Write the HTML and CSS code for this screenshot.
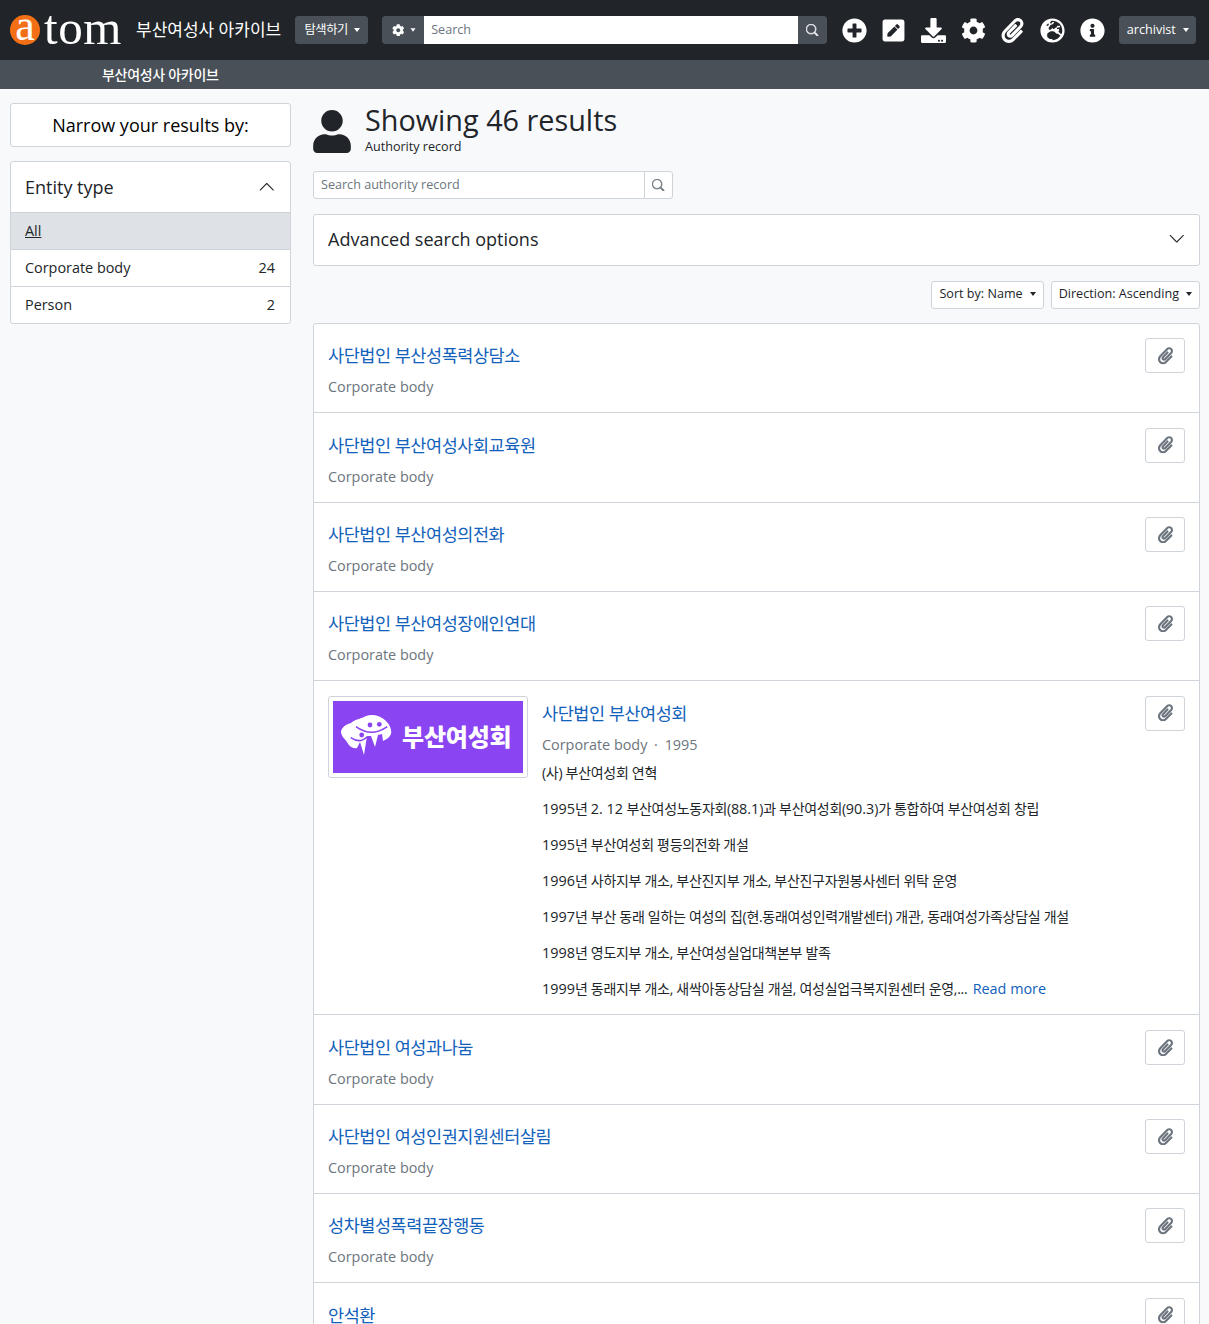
FILE: index.html
```html
<!DOCTYPE html>
<html lang="ko">
<head>
<meta charset="utf-8">
<title>부산여성사 아카이브</title>
<link rel="stylesheet" href="styles.css">
</head>
<body>
<svg class="defs" aria-hidden="true">
  <symbol id="i-search" viewBox="0 0 16 16"><path d="M11.742 10.344a6.5 6.5 0 1 0-1.397 1.398h-.001c.03.04.062.078.098.115l3.85 3.85a1 1 0 0 0 1.415-1.414l-3.85-3.85a1.007 1.007 0 0 0-.115-.1zM12 6.5a5.5 5.5 0 1 1-11 0 5.5 5.5 0 0 1 11 0z"/></symbol>
  <symbol id="i-cog" viewBox="0 0 512 512"><path d="M487.4 315.7l-42.6-24.6c4.3-23.2 4.3-47 0-70.2l42.6-24.6c4.9-2.8 7.1-8.6 5.5-14-11.1-35.6-30-67.8-54.7-94.6-3.8-4.1-10-5.1-14.8-2.3L380.8 110c-17.9-15.4-38.5-27.3-60.8-35.1V25.8c0-5.6-3.9-10.5-9.4-11.7-36.7-8.2-74.3-7.8-109.2 0-5.5 1.2-9.4 6.1-9.4 11.7V75c-22.2 7.9-42.8 19.8-60.8 35.1L88.7 85.5c-4.9-2.8-11-1.9-14.8 2.3-24.7 26.7-43.6 58.9-54.7 94.6-1.7 5.4.6 11.2 5.5 14L67.3 221c-4.3 23.2-4.3 47 0 70.2l-42.6 24.6c-4.9 2.8-7.1 8.6-5.5 14 11.1 35.6 30 67.8 54.7 94.6 3.8 4.1 10 5.1 14.8 2.3l42.6-24.6c17.9 15.4 38.5 27.3 60.8 35.1v49.2c0 5.6 3.9 10.5 9.4 11.7 36.7 8.2 74.3 7.8 109.2 0 5.5-1.2 9.4-6.1 9.4-11.7v-49.2c22.2-7.9 42.8-19.8 60.8-35.1l42.6 24.6c4.9 2.8 11 1.9 14.8-2.3 24.7-26.7 43.6-58.9 54.7-94.6 1.5-5.5-.7-11.3-5.6-14.1zM256 336c-44.1 0-80-35.9-80-80s35.9-80 80-80 80 35.9 80 80-35.9 80-80 80z"/></symbol>
  <symbol id="i-clip" viewBox="0 0 448 512"><path d="M43.246 466.142c-58.43-60.289-57.341-157.511 1.386-217.581L254.392 34c44.316-45.332 116.351-45.336 160.671 0 43.89 44.894 43.943 117.329 0 162.276L232.214 383.128c-29.855 30.537-78.633 30.111-107.982-.998-28.275-29.97-27.368-77.473 1.452-106.953l143.743-146.835c6.182-6.314 16.312-6.422 22.626-.241l22.861 22.379c6.315 6.182 6.422 16.312.241 22.626L171.427 319.927c-4.932 5.045-5.236 13.428-.648 18.292 4.372 4.634 11.245 4.711 15.688.165l182.849-186.851c19.613-20.062 19.613-52.725-.011-72.798-19.189-19.627-49.957-19.637-69.154 0L90.39 293.295c-34.763 35.56-35.299 93.12-1.191 128.313 34.01 35.093 88.985 35.137 123.058.286l172.06-175.999c6.177-6.319 16.307-6.433 22.626-.256l22.877 22.364c6.319 6.177 6.434 16.307.256 22.626l-172.06 175.998c-59.576 60.938-155.943 60.216-214.77-.485z"/></symbol>
</svg>

<header class="topbar">
  <a class="brand" href="#">
    <span class="logo"><span class="logo-a">a</span><span class="logo-rest">tom</span></span>
    <span class="brand-name">부산여성사 아카이브</span>
  </a>
  <button class="btn-dark browse">탐색하기<span class="caret"></span></button>
  <div class="searchbox">
    <button class="btn-dark cog-btn"><svg class="ic-cog"><use href="#i-cog"/></svg><span class="caret"></span></button>
    <span class="search-input">Search</span>
    <button class="btn-dark search-btn"><svg class="ic-search"><use href="#i-search"/></svg></button>
  </div>
  <nav class="iconbar">
    <svg class="nav-ic" viewBox="0 0 512 512"><path d="M256 8C119 8 8 119 8 256s111 248 248 248 248-111 248-248S393 8 256 8zm144 276c0 6.6-5.4 12-12 12h-92v92c0 6.6-5.4 12-12 12h-56c-6.6 0-12-5.4-12-12v-92h-92c-6.6 0-12-5.4-12-12v-56c0-6.6 5.4-12 12-12h92v-92c0-6.6 5.4-12 12-12h56c6.6 0 12 5.4 12 12v92h92c6.6 0 12 5.4 12 12v56z"/></svg>
    <svg class="nav-ic" viewBox="0 0 448 512"><path d="M400 480H48c-26.5 0-48-21.5-48-48V80c0-26.5 21.5-48 48-48h352c26.5 0 48 21.5 48 48v352c0 26.5-21.5 48-48 48zM238.1 177.9L102.4 313.6l-6.3 57.1c-.8 7.6 5.6 14.1 13.3 13.3l57.1-6.3L302.2 242c2.3-2.3 2.3-6.1 0-8.5L246.7 178c-2.5-2.4-6.3-2.4-8.6-.1zM345 165.1L314.9 135c-9.4-9.4-24.7-9.4-34.1 0l-23.1 23.1c-2.3 2.3-2.3 6.1 0 8.5l55.5 55.5c2.3 2.3 6.1 2.3 8.5 0L345 199.2c9.3-9.3 9.3-24.7 0-34.1z"/></svg>
    <svg class="nav-ic" viewBox="0 0 512 512"><path d="M216 0h80c13.3 0 24 10.7 24 24v168h87.7c17.8 0 26.7 21.5 14.1 34.1L269.7 378.3c-7.5 7.5-19.8 7.5-27.3 0L90.1 226.1c-12.6-12.6-3.7-34.1 14.1-34.1H192V24c0-13.3 10.7-24 24-24zm296 376v112c0 13.3-10.7 24-24 24H24c-13.3 0-24-10.7-24-24V376c0-13.3 10.7-24 24-24h146.7l49 49c20.1 20.1 52.5 20.1 72.6 0l49-49H488c13.3 0 24 10.7 24 24zm-124 88c0-11-9-20-20-20s-20 9-20 20 9 20 20 20 20-9 20-20zm64 0c0-11-9-20-20-20s-20 9-20 20 9 20 20 20 20-9 20-20z"/></svg>
    <svg class="nav-ic"><use href="#i-cog"/></svg>
    <svg class="nav-ic"><use href="#i-clip"/></svg>
    <svg class="nav-ic" viewBox="0 0 512 512"><path d="M256 8C119 8 8 119 8 256s111 248 248 248 248-111 248-248S393 8 256 8zm200 248c0 22.5-3.9 44.2-10.8 64.4h-20.3c-4.3 0-8.4-1.7-11.4-4.8l-32-32.6c-4.5-4.6-4.5-12.1.1-16.7l12.5-12.5v-8.7c0-3-1.2-5.9-3.3-8l-9.4-9.4c-2.1-2.1-5-3.3-8-3.3h-16c-6.2 0-11.3-5.1-11.3-11.3 0-3 1.2-5.9 3.3-8l9.4-9.4c2.1-2.1 5-3.3 8-3.3h32c6.2 0 11.3-5.1 11.3-11.3v-9.4c0-6.2-5.1-11.3-11.3-11.3h-36.7c-8.8 0-16 7.2-16 16v4.5c0 6.9-4.4 13-10.9 15.2l-31.6 10.5c-3.3 1.1-5.5 4.1-5.5 7.6v2.2c0 4.4-3.6 8-8 8h-16c-4.4 0-8-3.6-8-8s-3.6-8-8-8H247c-3 0-5.8 1.7-7.2 4.4l-9.4 18.7c-2.7 5.4-8.2 8.8-14.3 8.8H194c-8.8 0-16-7.2-16-16V199c0-4.2 1.7-8.3 4.7-11.3l20.1-20.1c4.6-4.6 7.2-10.9 7.2-17.5 0-3.4 2.2-6.5 5.5-7.6l40-13.3c1.7-.6 3.2-1.5 4.4-2.7l26.8-26.8c2.1-2.1 3.3-5 3.3-8 0-6.2-5.1-11.3-11.3-11.3H258l-16 16v8c0 4.4-3.6 8-8 8h-16c-4.4 0-8-3.6-8-8v-20c0-2.5 1.2-4.9 3.2-6.4l28.9-21.7c1.9-.1 3.8-.3 5.7-.3C367.8 56 456 144.2 456 256zM130.1 149.1c0-3 1.2-5.9 3.3-8l25.4-25.4c2.1-2.1 5-3.3 8-3.3 6.2 0 11.3 5.1 11.3 11.3v16c0 3-1.2 5.9-3.3 8l-9.4 9.4c-2.1 2.1-5 3.3-8 3.3h-16c-6.2 0-11.3-5.1-11.3-11.3zm128 306.4v-7.1c0-8.8-7.2-16-16-16h-20.2c-10.8 0-26.7-5.3-35.4-11.8l-22.2-16.7c-11.5-8.6-18.2-22.1-18.2-36.4v-23.9c0-16 8.4-30.8 22.1-39l42.9-25.7c7.1-4.2 15.2-6.5 23.4-6.5h31.2c10.9 0 21.4 3.9 29.6 10.9l43.2 37.1h18.3c8.5 0 16.6 3.4 22.6 9.4l17.3 17.3c3.4 3.4 8.1 5.3 12.9 5.3H423c-32.4 58.9-93.8 99.5-164.9 103.1z"/></svg>
    <svg class="nav-ic" viewBox="0 0 512 512"><path d="M256 8C119.043 8 8 119.083 8 256c0 136.997 111.043 248 248 248s248-111.003 248-248C504 119.083 392.957 8 256 8zm0 110c23.196 0 42 18.804 42 42s-18.804 42-42 42-42-18.804-42-42 18.804-42 42-42zm56 254c0 6.627-5.373 12-12 12h-88c-6.627 0-12-5.373-12-12v-24c0-6.627 5.373-12 12-12h12v-64h-12c-6.627 0-12-5.373-12-12v-24c0-6.627 5.373-12 12-12h64c6.627 0 12 5.373 12 12v100h12c6.627 0 12 5.373 12 12v24z"/></svg>
  </nav>
  <button class="btn-dark user">archivist<span class="caret"></span></button>
</header>
<div class="subbar"><span>부산여성사 아카이브</span></div>

<div class="page">
  <aside class="sidebar">
    <div class="narrow">Narrow your results by:</div>
    <section class="facet">
      <h2 class="facet-head">Entity type
        <svg class="chev" viewBox="0 0 16 16"><path fill-rule="evenodd" d="M1.646 11.354a.5.5 0 0 1 0-.708l6-6a.5.5 0 0 1 .708 0l6 6a.5.5 0 0 1-.708.708L8 5.707l-5.646 5.647a.5.5 0 0 1-.708 0z"/></svg>
      </h2>
      <a class="facet-row active" href="#"><span class="u">All</span></a>
      <a class="facet-row" href="#"><span>Corporate body</span><span>24</span></a>
      <a class="facet-row" href="#"><span>Person</span><span>2</span></a>
    </section>
  </aside>

  <main class="content">
    <div class="heading">
      <svg class="user-ic" viewBox="0 0 448 512"><path d="M224 256c70.7 0 128-57.3 128-128S294.7 0 224 0 96 57.3 96 128s57.3 128 128 128zm89.6 32h-16.7c-22.2 10.2-46.9 16-72.9 16s-50.6-5.8-72.9-16h-16.7C60.2 288 0 348.2 0 422.4V464c0 26.5 21.5 48 48 48h352c26.5 0 48-21.5 48-48v-41.6c0-74.2-60.2-134.4-134.4-134.4z"/></svg>
      <div>
        <h1>Showing 46 results</h1>
        <div class="sub">Authority record</div>
      </div>
    </div>
    <div class="inline-search">
      <span class="is-field">Search authority record</span>
      <span class="is-btn"><svg class="ic-search"><use href="#i-search"/></svg></span>
    </div>
    <div class="advanced">Advanced search options
      <svg class="chev" viewBox="0 0 16 16"><path fill-rule="evenodd" d="M1.646 4.646a.5.5 0 0 1 .708 0L8 10.293l5.646-5.647a.5.5 0 0 1 .708.708l-6 6a.5.5 0 0 1-.708 0l-6-6a.5.5 0 0 1 0-.708z"/></svg>
    </div>
    <div class="sorts">
      <button class="btn-white">Sort by: Name<span class="caret"></span></button>
      <button class="btn-white">Direction: Ascending<span class="caret"></span></button>
    </div>
    <div class="results">
      <article class="row">
        <div class="row-body"><a class="title" href="#">사단법인 부산성폭력상담소</a><div class="meta">Corporate body</div></div>
        <button class="clip"><svg><use href="#i-clip"/></svg></button>
      </article>
      <article class="row">
        <div class="row-body"><a class="title" href="#">사단법인 부산여성사회교육원</a><div class="meta">Corporate body</div></div>
        <button class="clip"><svg><use href="#i-clip"/></svg></button>
      </article>
      <article class="row">
        <div class="row-body"><a class="title" href="#">사단법인 부산여성의전화</a><div class="meta">Corporate body</div></div>
        <button class="clip"><svg><use href="#i-clip"/></svg></button>
      </article>
      <article class="row">
        <div class="row-body"><a class="title" href="#">사단법인 부산여성장애인연대</a><div class="meta">Corporate body</div></div>
        <button class="clip"><svg><use href="#i-clip"/></svg></button>
      </article>
      <article class="row">
        <div class="thumb">
          <div class="thumb-art">
            <svg class="thumb-mark" viewBox="0 0 52 40">
              <path fill="#fff" d="M0 16C2 11 6 9 10 8C14 4 20 4 25 1C31-1 39 0 45 6C49 10 51 15 50 19C49 22 46 24 42 26L41 19L37 20L34 32L30 21L26 21L23 40L19 27L16 33C12 34 8 31 6 27C3 23 0 21 0 16z"/>
              <circle fill="#8a44f2" cx="29" cy="10" r="2.4"/><circle fill="#8a44f2" cx="38.3" cy="9.3" r="2.4"/><circle fill="#8a44f2" cx="20.7" cy="20" r="2.4"/>
              <path fill="none" stroke="#8a44f2" stroke-width="1.5" d="M15 11.7Q30 23 46.3 11.7M9.7 22.7Q19 29 26.3 21.7"/>
            </svg>
            <span class="thumb-text">부산여성회</span>
          </div>
        </div>
        <div class="row-body">
          <a class="title" href="#">사단법인 부산여성회</a>
          <div class="meta">Corporate body <span class="dot">·</span> 1995</div>
          <div class="desc">
            <p>(사) 부산여성회 연혁</p>
            <p><span class="lat">1995</span>년 <span class="lat">2. 12</span> 부산여성노동자회(<span class="lat">88.1</span>)과 부산여성회(<span class="lat">90.3</span>)가 통합하여 부산여성회 창립</p>
            <p><span class="lat">1995</span>년 부산여성회 평등의전화 개설</p>
            <p><span class="lat">1996</span>년 사하지부 개소, 부산진지부 개소, 부산진구자원봉사센터 위탁 운영</p>
            <p><span class="lat">1997</span>년 부산 동래 일하는 여성의 집(현.동래여성인력개발센터) 개관, 동래여성가족상담실 개설</p>
            <p><span class="lat">1998</span>년 영도지부 개소, 부산여성실업대책본부 발족</p>
            <p class="last"><span class="lat">1999</span>년 동래지부 개소, 새싹아동상담실 개설, 여성실업극복지원센터 운영,... <a class="more" href="#">Read more</a></p>
          </div>
        </div>
        <button class="clip"><svg><use href="#i-clip"/></svg></button>
      </article>
      <article class="row">
        <div class="row-body"><a class="title" href="#">사단법인 여성과나눔</a><div class="meta">Corporate body</div></div>
        <button class="clip"><svg><use href="#i-clip"/></svg></button>
      </article>
      <article class="row">
        <div class="row-body"><a class="title" href="#">사단법인 여성인권지원센터살림</a><div class="meta">Corporate body</div></div>
        <button class="clip"><svg><use href="#i-clip"/></svg></button>
      </article>
      <article class="row">
        <div class="row-body"><a class="title" href="#">성차별성폭력끝장행동</a><div class="meta">Corporate body</div></div>
        <button class="clip"><svg><use href="#i-clip"/></svg></button>
      </article>
      <article class="row">
        <div class="row-body"><a class="title" href="#">안석환</a><div class="meta">Person</div></div>
        <button class="clip"><svg><use href="#i-clip"/></svg></button>
      </article>
    </div>
  </main>
</div>
</body>
</html>
```

FILE: styles.css
```css
* { box-sizing: border-box; }
html, body { margin: 0; height: 1324px; overflow: hidden; }
body {
  background: #f8f9fb;
  color: #212529;
  font: 14.4px/1.5 "Open Sans", "Noto Sans CJK KR", sans-serif;
}
a { text-decoration: none; color: inherit; }
p { margin: 0; }
button { font: inherit; cursor: pointer; }
.defs { display: none; }

.topbar {
  height: 60px;
  background: #212529;
  display: flex;
  align-items: center;
  padding: 0 12px 0 10px;
  color: #fff;
}
.brand { display: flex; align-items: center; }
.logo { display: flex; align-items: center; width: 112px; font-family: "Liberation Serif", serif; color: #fff; }
.logo-a {
  width: 30px; height: 30px;
  flex: none;
  border-radius: 50%;
  background: #f26f15;
  font-size: 44px; line-height: 22px;
  text-align: center;
}
.logo-rest { font-size: 49px; letter-spacing: .6px; line-height: 40px; margin-left: 4px; margin-top: -5px; }
.brand-name { font-size: 17px; margin-left: 14px; white-space: nowrap; }
.caret {
  display: inline-block;
  margin-left: 7px;
  vertical-align: 2px;
  border-top: 4px solid;
  border-left: 3.5px solid transparent;
  border-right: 3.5px solid transparent;
}
.btn-dark {
  background: #495057;
  color: #fff;
  border: 1px solid #495057;
  border-radius: 3px;
  height: 28px;
  font-size: 12.6px;
  padding: 0 7px;
  white-space: nowrap;
}
.browse { margin-left: 14px; width: 73px; font-size: 12.25px; letter-spacing: -.4px; padding: 0 0 0 1px; }
.browse .caret { margin-left: 6px; }
.searchbox { display: flex; margin-left: 14px; width: 445px; }
.cog-btn { border-radius: 3px 0 0 3px; width: 42px; padding: 0 0 0 2px; display: flex; align-items: center; justify-content: center; }
.cog-btn .caret { margin-left: 5px; transform: scale(.85); }
.ic-cog { width: 12.5px; height: 12.5px; fill: #fff; }
.search-input { flex: 1; background: #fff; color: #6c757d; font-size: 12.6px; line-height: 28px; padding-left: 7px; }
.search-btn { border-radius: 0 3px 3px 0; width: 29px; padding: 0; display: flex; align-items: center; justify-content: center; }
.ic-search { width: 12.5px; height: 12.5px; fill: #e9ecef; stroke: #e9ecef; stroke-width: .8px; }
.iconbar { display: flex; align-items: center; margin-left: 14.5px; gap: 14.7px; }
.nav-ic { width: 25px; height: 25px; fill: #fff; display: block; }
.user { margin-left: 14.5px; padding: 0 6.5px; }

.subbar {
  height: 29px;
  background: #495057;
  color: #fff;
  font-size: 14px;
  font-weight: 500;
  letter-spacing: -.3px;
  line-height: 29px;
  padding-left: 102px;
}

.page { display: flex; gap: 22px; padding: 14px 9px 0 10px; }
.sidebar { width: 281px; flex: none; }
.content { flex: 1; min-width: 0; }

.narrow {
  background: #fff;
  border: 1px solid #ced4da;
  border-radius: 3px;
  height: 44px;
  font-size: 18px;
  line-height: 42px;
  text-align: center;
  color: #000;
}
.facet {
  margin-top: 14px;
  background: #fff;
  border: 1px solid #ced4da;
  border-radius: 3px;
  overflow: hidden;
}
.facet-head {
  margin: 0;
  height: 50px;
  display: flex;
  align-items: center;
  justify-content: space-between;
  padding: 0 15px 0 14px;
  font-size: 18px;
  font-weight: 400;
}
.chev { width: 17.5px; height: 17.5px; fill: #212529; flex: none; }
.facet-row {
  height: 37px;
  display: flex;
  justify-content: space-between;
  align-items: center;
  padding: 0 15px 0 14px;
  border-top: 1px solid #ced4da;
  color: #212529;
}
.facet-row.active { background: #dee2e6; }
.u { text-decoration: underline; }

.heading { display: flex; align-items: flex-start; gap: 14px; height: 68px; }
.user-ic { width: 38px; height: 43px; margin-top: 7px; fill: #212529; flex: none; }
h1 { margin: 0; font-size: 28.8px; font-weight: 400; line-height: 34px; }
.sub { font-size: 12.6px; line-height: 18px; margin-top: 1px; }
.inline-search {
  display: flex;
  width: 360px;
  height: 28px;
  background: #fff;
  border: 1px solid #ced4da;
  border-radius: 3px;
  font-size: 12.6px;
  color: #6c757d;
}
.is-field { flex: 1; line-height: 26px; padding-left: 7px; }
.is-btn { width: 28px; border-left: 1px solid #ced4da; display: flex; align-items: center; justify-content: center; }
.is-btn .ic-search { fill: #6c757d; stroke: #6c757d; stroke-width: .6px; }
.advanced {
  margin-top: 15px;
  height: 52px;
  background: #fff;
  border: 1px solid #ced4da;
  border-radius: 3px;
  display: flex;
  align-items: center;
  justify-content: space-between;
  padding: 0 14px 2px;
  font-size: 18px;
}
.sorts { display: flex; justify-content: flex-end; gap: 7px; margin-top: 15px; }
.btn-white {
  height: 28px;
  background: #fff;
  border: 1px solid #ced4da;
  border-radius: 3px;
  color: #212529;
  font-size: 12.6px;
  padding: 0 7px 2px;
}
.results {
  margin-top: 14px;
  background: #fff;
  border: 1px solid #ced4da;
  border-radius: 3px 3px 0 0;
}
.row {
  display: flex;
  align-items: flex-start;
  gap: 14px;
  padding: 14.4px 14px 14.9px 14px;
  border-bottom: 1px solid #ced4da;
}
.row-body { flex: 1; min-width: 0; }
.title { display: block; color: #1261bb; font-size: 17.5px; letter-spacing: -.45px; line-height: 34.5px; }
.meta { color: #6c757d; margin-top: 3.5px; line-height: 21px; }
.dot { margin: 0 3px; }
.clip {
  width: 40px; height: 35px;
  flex: none;
  background: #fff;
  border: 1px solid #ced4da;
  border-radius: 3px;
  padding: 0;
  display: flex;
  align-items: center;
  justify-content: center;
}
.clip svg { width: 15px; height: 17.5px; fill: #6c757d; }
.thumb {
  flex: none;
  width: 200px;
  height: 82px;
  padding: 4px;
  background: #fff;
  border: 1px solid #ced4da;
  border-radius: 3px;
}
.thumb-art {
  height: 72px;
  background: #8a44f2;
  display: flex;
  align-items: center;
  padding-left: 8px;
  gap: 9px;
  color: #fff;
}
.thumb-mark { width: 52px; height: 40px; flex: none; margin-top: -3px; }
.thumb-text { font-size: 24px; font-weight: 900; letter-spacing: -.2px; white-space: nowrap; }
.desc { margin-top: 7.5px; font-size: 14px; letter-spacing: -.3px; padding-bottom: .5px; }
.desc p { margin-bottom: 15px; line-height: 21px; }
.desc .last { margin: 1.5px 0 0; }
.lat { font-size: 14.4px; letter-spacing: 0; }
.more { color: #1261bb; font-size: 14.4px; letter-spacing: 0; margin-left: 2px; }
```
